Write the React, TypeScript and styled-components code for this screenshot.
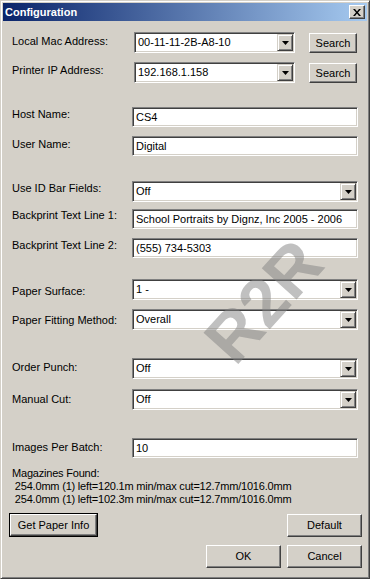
import styled, { createGlobalStyle } from "styled-components";

const GlobalStyle = createGlobalStyle`
  html, body {
    margin: 0;
    padding: 0;
    background: #d4d0c8;
  }
  * {
    box-sizing: border-box;
  }
`;

const FONT = `"Liberation Sans", Arial, sans-serif`;

const Window = styled.div`
  position: relative;
  width: 370px;
  height: 579px;
  background: #d4d0c8;
  border: 1px solid;
  border-color: #d4d0c8 #404040 #404040 #d4d0c8;
  box-shadow: inset 1px 1px #fff, inset -1px -1px #808080;
  padding: 2px;
  font-family: ${FONT};
  font-size: 11px;
  color: #000;
  overflow: hidden;
`;

const TitleBar = styled.div`
  height: 18px;
  display: flex;
  align-items: center;
  justify-content: space-between;
  padding: 0 2px 0 2px;
  background: linear-gradient(to right, #0a246a, #a6caf0);
`;

const TitleText = styled.span`
  color: #fff;
  font-weight: bold;
  font-size: 11px;
  line-height: 18px;
`;

const CloseButton = styled.div`
  width: 16px;
  height: 14px;
  background: #d4d0c8;
  border: 1px solid;
  border-color: #fff #404040 #404040 #fff;
  box-shadow: inset -1px -1px #808080;
  display: flex;
  align-items: center;
  justify-content: center;
`;

const Content = styled.div`
  display: flex;
  flex-direction: column;
`;

const FieldRow = styled.div<{ $top: number }>`
  display: flex;
  align-items: flex-start;
  margin-top: ${(p) => p.$top}px;
  padding-left: 9px;
`;

const Label = styled.div<{ $w?: number; $dy: number }>`
  width: ${(p) => p.$w ?? 120}px;
  flex: none;
  line-height: 13px;
  padding-top: ${(p) => p.$dy}px;
  white-space: nowrap;
`;

const Sunken = styled.div<{ $w: number; $h: number }>`
  width: ${(p) => p.$w}px;
  height: ${(p) => p.$h}px;
  flex: none;
  display: flex;
  align-items: stretch;
  background: #fff;
  border: 1px solid;
  border-color: #808080 #fff #fff #808080;
  box-shadow: inset 1px 1px #404040, inset -1px -1px #d4d0c8;
  padding: 2px 2px 2px 2px;
`;

const FieldText = styled.div`
  flex: 1;
  padding-left: 1px;
  line-height: 15px;
  white-space: nowrap;
  overflow: hidden;
`;

const DropButton = styled.div`
  width: 16px;
  flex: none;
  margin: -1px -1px -1px 0;
  background: #d4d0c8;
  border: 1px solid;
  border-color: #d4d0c8 #404040 #404040 #d4d0c8;
  box-shadow: inset 1px 1px #fff, inset -1px -1px #808080;
  display: flex;
  align-items: center;
  justify-content: center;
`;

const Button = styled.div<{ $w: number; $h?: number; $default?: boolean }>`
  width: ${(p) => p.$w}px;
  height: ${(p) => p.$h ?? 23}px;
  flex: none;
  display: flex;
  align-items: center;
  justify-content: center;
  background: #d4d0c8;
  border: 1px solid;
  border-color: #fff #404040 #404040 #fff;
  box-shadow: inset -1px -1px #808080;
  outline: ${(p) => (p.$default ? "1px solid #000" : "none")};
  outline-offset: 0;
  line-height: 13px;
  white-space: nowrap;
`;

const SearchButton = styled(Button)`
  margin-left: 14px;
  margin-top: 1px;
`;

const InfoBlock = styled.div`
  margin-top: 9px;
  padding-left: 9px;
  line-height: 13px;
  white-space: pre;
  letter-spacing: -0.2px;
`;

const ButtonRow = styled.div<{ $top: number }>`
  display: flex;
  align-items: flex-start;
  justify-content: space-between;
  margin-top: ${(p) => p.$top}px;
  padding: 0 5px 0 7px;
`;

const ButtonGroup = styled.div`
  display: flex;
  gap: 6px;
  margin-left: auto;
`;

const Watermark = styled.div`
  position: absolute;
  left: 262px;
  top: 300px;
  transform: translate(-50%, -50%) rotate(-48deg);
  font-family: ${FONT};
  font-weight: bold;
  font-size: 68px;
  line-height: 1;
  color: rgba(130, 130, 130, 0.5);
  pointer-events: none;
  white-space: nowrap;
`;

const Arrow = () => (
  <svg width="7" height="4" viewBox="0 0 7 4">
    <path d="M0 0h7L3.5 4z" fill="#000" />
  </svg>
);

function Combo({ value, w = 226, h = 21 }: { value: string; w?: number; h?: number }) {
  return (
    <Sunken $w={w} $h={h}>
      <FieldText>{value}</FieldText>
      <DropButton>
        <Arrow />
      </DropButton>
    </Sunken>
  );
}

function Edit({ value }: { value: string }) {
  return (
    <Sunken $w={226} $h={20}>
      <FieldText>{value}</FieldText>
    </Sunken>
  );
}

export default function App() {
  return (
    <>
      <GlobalStyle />
      <Window>
        <TitleBar>
          <TitleText>Configuration</TitleText>
          <CloseButton>
            <svg width="8" height="7" viewBox="0 0 8 7">
              <path d="M0 0h2l2 2.5L6 0h2L5 3.5 8 7H6L4 4.5 2 7H0l3-3.5z" fill="#000" />
            </svg>
          </CloseButton>
        </TitleBar>
        <Content>
          <FieldRow $top={11}>
            <Label $w={122} $dy={3}>Local Mac Address:</Label>
            <Combo value="00-11-11-2B-A8-10" w={161} />
            <SearchButton $w={48} $h={20}>Search</SearchButton>
          </FieldRow>
          <FieldRow $top={9}>
            <Label $w={122} $dy={2}>Printer IP Address:</Label>
            <Combo value="192.168.1.158" w={161} />
            <SearchButton $w={48} $h={20}>Search</SearchButton>
          </FieldRow>

          <FieldRow $top={24}>
            <Label $dy={1}>Host Name:</Label>
            <Edit value="CS4" />
          </FieldRow>
          <FieldRow $top={9}>
            <Label $dy={2}>User Name:</Label>
            <Edit value="Digital" />
          </FieldRow>

          <FieldRow $top={25}>
            <Label $dy={1}>Use ID Bar Fields:</Label>
            <Combo value="Off" />
          </FieldRow>
          <FieldRow $top={7}>
            <Label $dy={0}>Backprint Text Line 1:</Label>
            <Edit value="School Portraits by Dignz, Inc 2005 - 2006" />
          </FieldRow>
          <FieldRow $top={9}>
            <Label $dy={1}>Backprint Text Line 2:</Label>
            <Edit value="(555) 734-5303" />
          </FieldRow>

          <FieldRow $top={21}>
            <Label $dy={6}>Paper Surface:</Label>
            <Combo value="1 -" />
          </FieldRow>
          <FieldRow $top={9}>
            <Label $dy={5}>Paper Fitting Method:</Label>
            <Combo value="Overall" />
          </FieldRow>

          <FieldRow $top={28}>
            <Label $dy={3}>Order Punch:</Label>
            <Combo value="Off" />
          </FieldRow>
          <FieldRow $top={10}>
            <Label $dy={4}>Manual Cut:</Label>
            <Combo value="Off" />
          </FieldRow>

          <FieldRow $top={28}>
            <Label $dy={3}>Images Per Batch:</Label>
            <Edit value="10" />
          </FieldRow>

          <InfoBlock>
            {"Magazines Found:\n 254.0mm (1) left=120.1m min/max cut=12.7mm/1016.0mm\n 254.0mm (1) left=102.3m min/max cut=12.7mm/1016.0mm"}
          </InfoBlock>

          <ButtonRow $top={8}>
            <Button $w={87} $h={22} $default>Get Paper Info</Button>
            <Button $w={75}>Default</Button>
          </ButtonRow>
          <ButtonRow $top={8}>
            <ButtonGroup>
              <Button $w={75}>OK</Button>
              <Button $w={75}>Cancel</Button>
            </ButtonGroup>
          </ButtonRow>
        </Content>
        <Watermark>R2R</Watermark>
      </Window>
    </>
  );
}
